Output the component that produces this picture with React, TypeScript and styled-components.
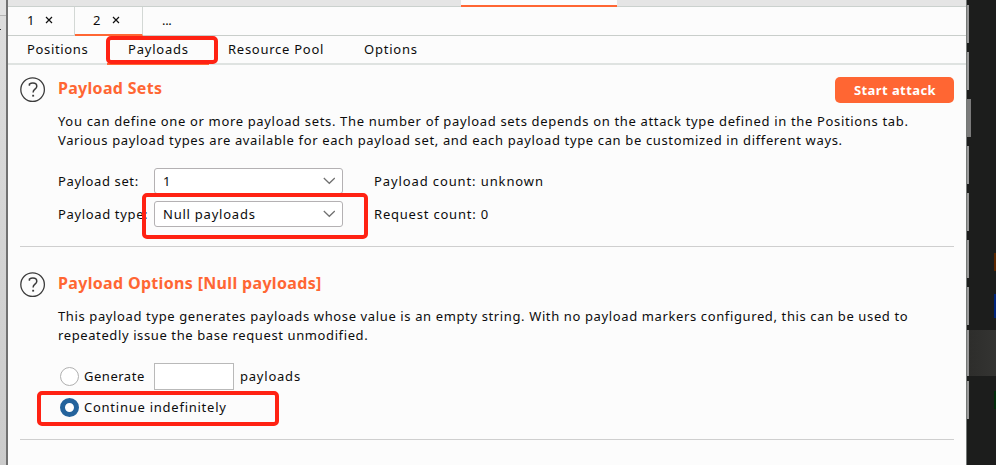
import React from "react";
import styled, { createGlobalStyle } from "styled-components";

const Global = createGlobalStyle`
  * { box-sizing: border-box; }
  body { margin: 0; overflow: hidden; background: #1c1d1c; }
`;

const Desktop = styled.div`
  display: grid;
  grid-template-columns: 6px 961px 29px;
  width: 996px;
  height: 465px;
  font: 13px/19px "Noto Sans", "Open Sans", sans-serif;
  color: #0c0c0c;
`;

const LeftEdge = styled.div`
  display: flex;
  flex-direction: column;
  background: linear-gradient(#dedede, #cbcbcb);
`;
const LeftEdgeTop = styled.div`
  height: 16px;
  background: #e1e1e1;
  border-bottom: 1px solid #b4b4b4;
`;
const LeftEdgeMark = styled.div`
  width: 1px;
  height: 1px;
  margin-top: 13px;
  background: #333;
`;

const Window = styled.main`
  position: relative;
  display: flex;
  flex-direction: column;
  height: 465px;
  border-left: 2px solid #717171;
  border-right: 1px solid #747876;
  background: #fcfcfc;
`;

const ToolBand = styled.div`
  height: 7px;
  flex: none;
  padding-left: 453px;
  background: #e5e5e5;
  border-bottom: 1px solid #cbd1ce;
`;
const ToolTab = styled.div`
  width: 156px;
  height: 7px;
  background: #fcfcfc;
  border-bottom: 2px solid #ff6633;
`;

const AttackTabs = styled.div`
  display: flex;
  height: 29px;
  flex: none;
  border-bottom: 1px solid #c9cecb;
`;
const AttackTab = styled.div<{ $width: number; $active?: boolean; $last?: boolean }>`
  display: flex;
  align-items: center;
  width: ${(p) => p.$width}px;
  height: 29px;
  padding: ${(p) => (p.$active ? "0 0 1px 18px" : "0 0 2px 19px")};
  gap: ${(p) => (p.$active ? 11 : 10)}px;
  border-right: ${(p) => (p.$last ? "none" : "1px solid #d3d8d5")};
  border-bottom: ${(p) => (p.$active ? "2px solid #ff6633" : "1px solid #c9cecb")};
`;

const SubTabs = styled.nav`
  display: flex;
  height: 29px;
  flex: none;
  border-bottom: 2px solid #dfe3e1;
`;
const SubTab = styled.div<{ $width: number; $pad: number; $active?: boolean }>`
  width: ${(p) => p.$width}px;
  height: 29px;
  padding: 4px 0 0 ${(p) => p.$pad}px;
  border-bottom: ${(p) => (p.$active ? "2px solid #ff6633" : "none")};
`;

const Text = styled.span<{ $ls?: number }>`
  display: block;
  white-space: nowrap;
  letter-spacing: ${(p) => p.$ls ?? 0.7}px;
`;

const Section = styled.section<{ $top: number; $height: number }>`
  display: grid;
  grid-template-columns: 38px 1fr;
  align-content: start;
  flex: none;
  height: ${(p) => p.$height}px;
  margin: 0 12px;
  padding-top: ${(p) => p.$top}px;
  border-bottom: 1px solid #cfcfcf;
`;
const Help = styled.svg`
  display: block;
  width: 26px;
  height: 26px;
`;
const SectionHead = styled.header`
  display: flex;
  justify-content: space-between;
  height: 35px;
`;
const Title = styled.h2<{ $ls: number }>`
  margin: 0;
  font-size: 16px;
  font-weight: 700;
  line-height: 23px;
  letter-spacing: ${(p) => p.$ls}px;
  color: #ff6633;
`;
const StartButton = styled.button`
  width: 119px;
  height: 26px;
  padding: 0 0 0 1px;
  border: 0;
  border-radius: 5px;
  background: #ff6633;
  color: #fff;
  font: 700 13px/26px "Noto Sans", sans-serif;
  letter-spacing: 0.42px;
`;
const Body = styled.div`
  grid-column: 2;
`;

const Form = styled.div`
  display: grid;
  grid-template-columns: 96px 189px 1fr;
  grid-auto-rows: 26px;
  row-gap: 7px;
  align-items: center;
  margin-top: 18px;
`;
const Select = styled.div`
  display: flex;
  align-items: center;
  justify-content: space-between;
  height: 26px;
  padding: 0 7px 0 8px;
  border: 1px solid #b4b1b3;
  border-radius: 3px;
  background: #fff;
`;
const Count = styled.div`
  padding-left: 31px;
`;

const RadioRow = styled.label<{ $height: number }>`
  display: flex;
  align-items: center;
  height: ${(p) => p.$height}px;
  margin-left: 2px;
`;
const Radio = styled.span<{ $on?: boolean }>`
  flex: none;
  width: 19px;
  height: 19px;
  margin-right: 5px;
  border: ${(p) => (p.$on ? "5px solid #24639c" : "1px solid #b0b0b0")};
  border-radius: 50%;
  background: #fff;
`;
const RadioLabel = styled.div<{ $width: number }>`
  width: ${(p) => p.$width}px;
`;
const CountInput = styled.div`
  width: 80px;
  height: 27px;
  margin-right: 6px;
  border: 1px solid #b9b9b9;
  background: #fff;
`;
const Choices = styled.div`
  margin-top: 18px;
`;

const Marker = styled.div<{ $x: number; $y: number; $w: number; $h: number }>`
  position: absolute;
  left: ${(p) => p.$x}px;
  top: ${(p) => p.$y}px;
  width: ${(p) => p.$w}px;
  height: ${(p) => p.$h}px;
  border: 4px solid #ff2213;
  border-radius: 5px;
`;

const RightEdge = styled.div`
  display: flex;
  flex-direction: column;
  padding-top: 5px;
  gap: 9px;
  background: #1c1d1c;
`;
const Slot = styled.div<{ $w?: number; $h?: number; $gap?: number; $lit?: boolean }>`
  display: flex;
  justify-content: space-between;
  align-items: center;
  flex: none;
  height: ${(p) => p.$h ?? 38}px;
  margin-top: ${(p) => p.$gap ?? 0}px;
  background: ${(p) => (p.$lit ? "linear-gradient(90deg, #2d2d2b, #343432)" : "none")};

  &::before {
    content: "";
    width: ${(p) => p.$w ?? 2}px;
    height: 100%;
    background: ${(p) => (p.$w ? "#7b7b7b" : "#999")};
  }
`;
const Sliver = styled.i<{ $color: string; $h: number; $shift?: number }>`
  width: 2px;
  height: ${(p) => p.$h}px;
  margin-top: ${(p) => p.$shift ?? 0}px;
  background: ${(p) => p.$color};
`;

const HelpIcon = () => (
  <Help viewBox="0 0 26 26" fill="none" stroke="#3c3c3c">
    <circle cx="12.6" cy="12.6" r="11.8" strokeWidth="1.3" />
    <path d="M9.4 8.8V7.2C10.4 6.4 11.5 6 12.9 6c2.5 0 3.9 1.2 3.9 3.2 0 3-3.7 3-3.7 6.2" strokeWidth="1.5" />
    <path d="M12.2 18.7h1.9" strokeWidth="1.8" />
  </Help>
);
const Chevron = () => (
  <svg width="12" height="8" viewBox="0 0 12 8" fill="none" stroke="#707070" strokeWidth="1.2">
    <path d="M0.8 1L6.3 6.3L11.8 1" />
  </svg>
);
const Close = () => (
  <svg width="8" height="8" viewBox="0 0 8 8" stroke="#111" strokeWidth="1.2">
    <path d="M1 1L7 7M7 1L1 7" />
  </svg>
);

export default function App() {
  return (
    <Desktop>
      <Global />
      <LeftEdge>
        <LeftEdgeTop />
        <LeftEdgeMark />
      </LeftEdge>
      <Window>
        <ToolBand>
          <ToolTab />
        </ToolBand>
        <AttackTabs>
          <AttackTab $width={67}><Text>1</Text><Close /></AttackTab>
          <AttackTab $width={68} $active><Text>2</Text><Close /></AttackTab>
          <AttackTab $width={50} $last><Text $ls={-0.3}>...</Text></AttackTab>
        </AttackTabs>
        <SubTabs>
          <SubTab $width={99} $pad={19}><Text $ls={0.65}>Positions</Text></SubTab>
          <SubTab $width={102} $pad={21} $active><Text $ls={0.78}>Payloads</Text></SubTab>
          <SubTab $width={136} $pad={19}><Text $ls={0.74}>Resource Pool</Text></SubTab>
          <SubTab $width={100} $pad={19}><Text $ls={0.78}>Options</Text></SubTab>
        </SubTabs>

        <Section $top={12} $height={182}>
          <HelpIcon />
          <SectionHead>
            <Title $ls={0.3}>Payload Sets</Title>
            <StartButton>Start attack</StartButton>
          </SectionHead>
          <Body>
            <Text $ls={0.66}>You can define one or more payload sets. The number of payload sets depends on the attack type defined in the Positions tab.</Text>
            <Text $ls={0.64}>Various payload types are available for each payload set, and each payload type can be customized in different ways.</Text>
            <Form>
              <Text $ls={0.61}>Payload set:</Text>
              <Select><Text>1</Text><Chevron /></Select>
              <Count><Text $ls={0.89}>Payload count: unknown</Text></Count>
              <Text $ls={0.65}>Payload type:</Text>
              <Select><Text $ls={0.77}>Null payloads</Text><Chevron /></Select>
              <Count><Text $ls={0.79}>Request count: 0</Text></Count>
            </Form>
          </Body>
        </Section>

        <Section $top={25} $height={193}>
          <HelpIcon />
          <SectionHead>
            <Title $ls={0.33}>Payload Options [Null payloads]</Title>
          </SectionHead>
          <Body>
            <Text $ls={0.622}>This payload type generates payloads whose value is an empty string. With no payload markers configured, this can be used to</Text>
            <Text $ls={0.61}>repeatedly issue the base request unmodified.</Text>
            <Choices>
              <RadioRow $height={27}>
                <Radio />
                <RadioLabel $width={70}><Text $ls={0.52}>Generate</Text></RadioLabel>
                <CountInput />
                <Text $ls={0.78}>payloads</Text>
              </RadioRow>
              <RadioRow $height={35}>
                <Radio $on />
                <Text $ls={0.75}>Continue indefinitely</Text>
              </RadioRow>
            </Choices>
          </Body>
        </Section>

        <Marker $x={98} $y={36} $w={112} $h={28} />
        <Marker $x={134} $y={193} $w={226} $h={46} />
        <Marker $x={29} $y={391} $w={242} $h={35} />
      </Window>
      <RightEdge>
        <Slot />
        <Slot />
        <Slot $w={4} />
        <Slot />
        <Slot />
        <Slot><Sliver $color="#5a2700" $h={18} $shift={6} /></Slot>
        <Slot><Sliver $color="#00257c" $h={24} /></Slot>
        <Slot $h={46} $gap={-4} $lit />
        <Slot $gap={-4}><Sliver $color="#032b0c" $h={18} /></Slot>
      </RightEdge>
    </Desktop>
  );
}
